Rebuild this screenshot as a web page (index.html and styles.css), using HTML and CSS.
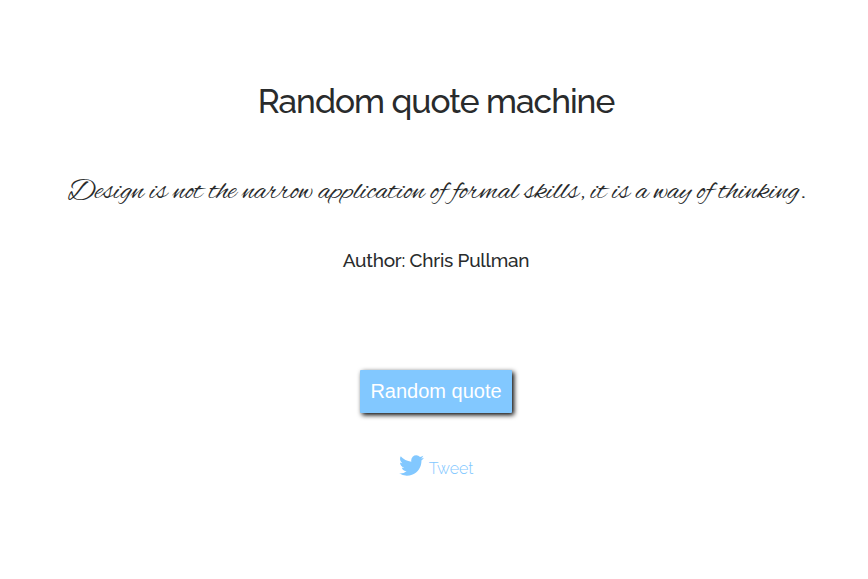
FILE: index.html
```html
<!DOCTYPE html>
<html lang="en">
<head>
<meta charset="utf-8">
<title>Random quote machine</title>
<link rel="stylesheet" href="styles.css">
</head>
<body>
<main class="page">
  <h1 class="title">Random quote machine</h1>
  <p class="quote">Design is not the narrow application of formal skills, it is a way of thinking.</p>
  <p class="author">Author: Chris Pullman</p>
  <button class="random" type="button">Random quote</button>
  <a class="tweet" href="#">
    <svg class="bird" viewBox="108 256 1576 1280" aria-hidden="true"><path d="M1684 408q-67 98-162 167 1 14 1 42 0 130-38 259.5t-115.5 248.5-184.5 210.5-258 146-323 54.5q-271 0-496-145 35 4 78 4 225 0 401-138-105-2-188-64.5t-114-159.5q33 5 61 5 43 0 85-11-112-23-185.5-111.5t-73.5-205.5v-4q68 38 146 41-66-44-105-115t-39-154q0-88 44-163 121 149 294.5 238.5t371.5 99.5q-8-38-8-74 0-134 94.5-228.5t228.5-94.5q140 0 236 102 109-21 205-78-37 115-142 178 93-10 186-50z"/></svg>
    <span class="label">Tweet</span>
  </a>
</main>
</body>
</html>
```
FILE: styles.css
```css
body {
  margin: 0;
  background: #fff;
  color: #292b2c;
  font-family: Raleway, Lato, sans-serif;
}
.page {
  display: flex;
  flex-direction: column;
  align-items: center;
  padding: 82px 0 0 4px;
}
.title {
  margin: 0;
  font-size: 33.5px;
  font-weight: 500;
  line-height: 40px;
  letter-spacing: -1px;
  white-space: nowrap;
}
.quote {
  margin: 50px 0 0 2px;
  font-family: "Alex Brush", Lato, cursive;
  font-size: 30px;
  font-weight: 300;
  line-height: 40px;
  white-space: nowrap;
}
.author {
  margin: 36px 0 0;
  font-size: 19px;
  font-weight: 500;
  line-height: 24px;
  letter-spacing: -0.25px;
  white-space: nowrap;
}
.random {
  width: 152px;
  height: 43px;
  margin: 98px 0 0;
  padding: 0;
  border: 0;
  border-radius: 1px;
  background: #82c8ff;
  box-shadow: 2px 2px 5px #000;
  color: #fff;
  font: 20px/43px "Liberation Sans", sans-serif;
}
.tweet {
  display: flex;
  align-items: flex-start;
  gap: 5px;
  margin-top: 42px;
  color: #82c8ff;
  text-decoration: none;
}
.bird {
  width: 25px;
  height: 21px;
  fill: #82c8ff;
}
.label {
  margin-top: 4px;
  font-size: 16px;
  font-weight: 300;
  line-height: 20px;
}
```
